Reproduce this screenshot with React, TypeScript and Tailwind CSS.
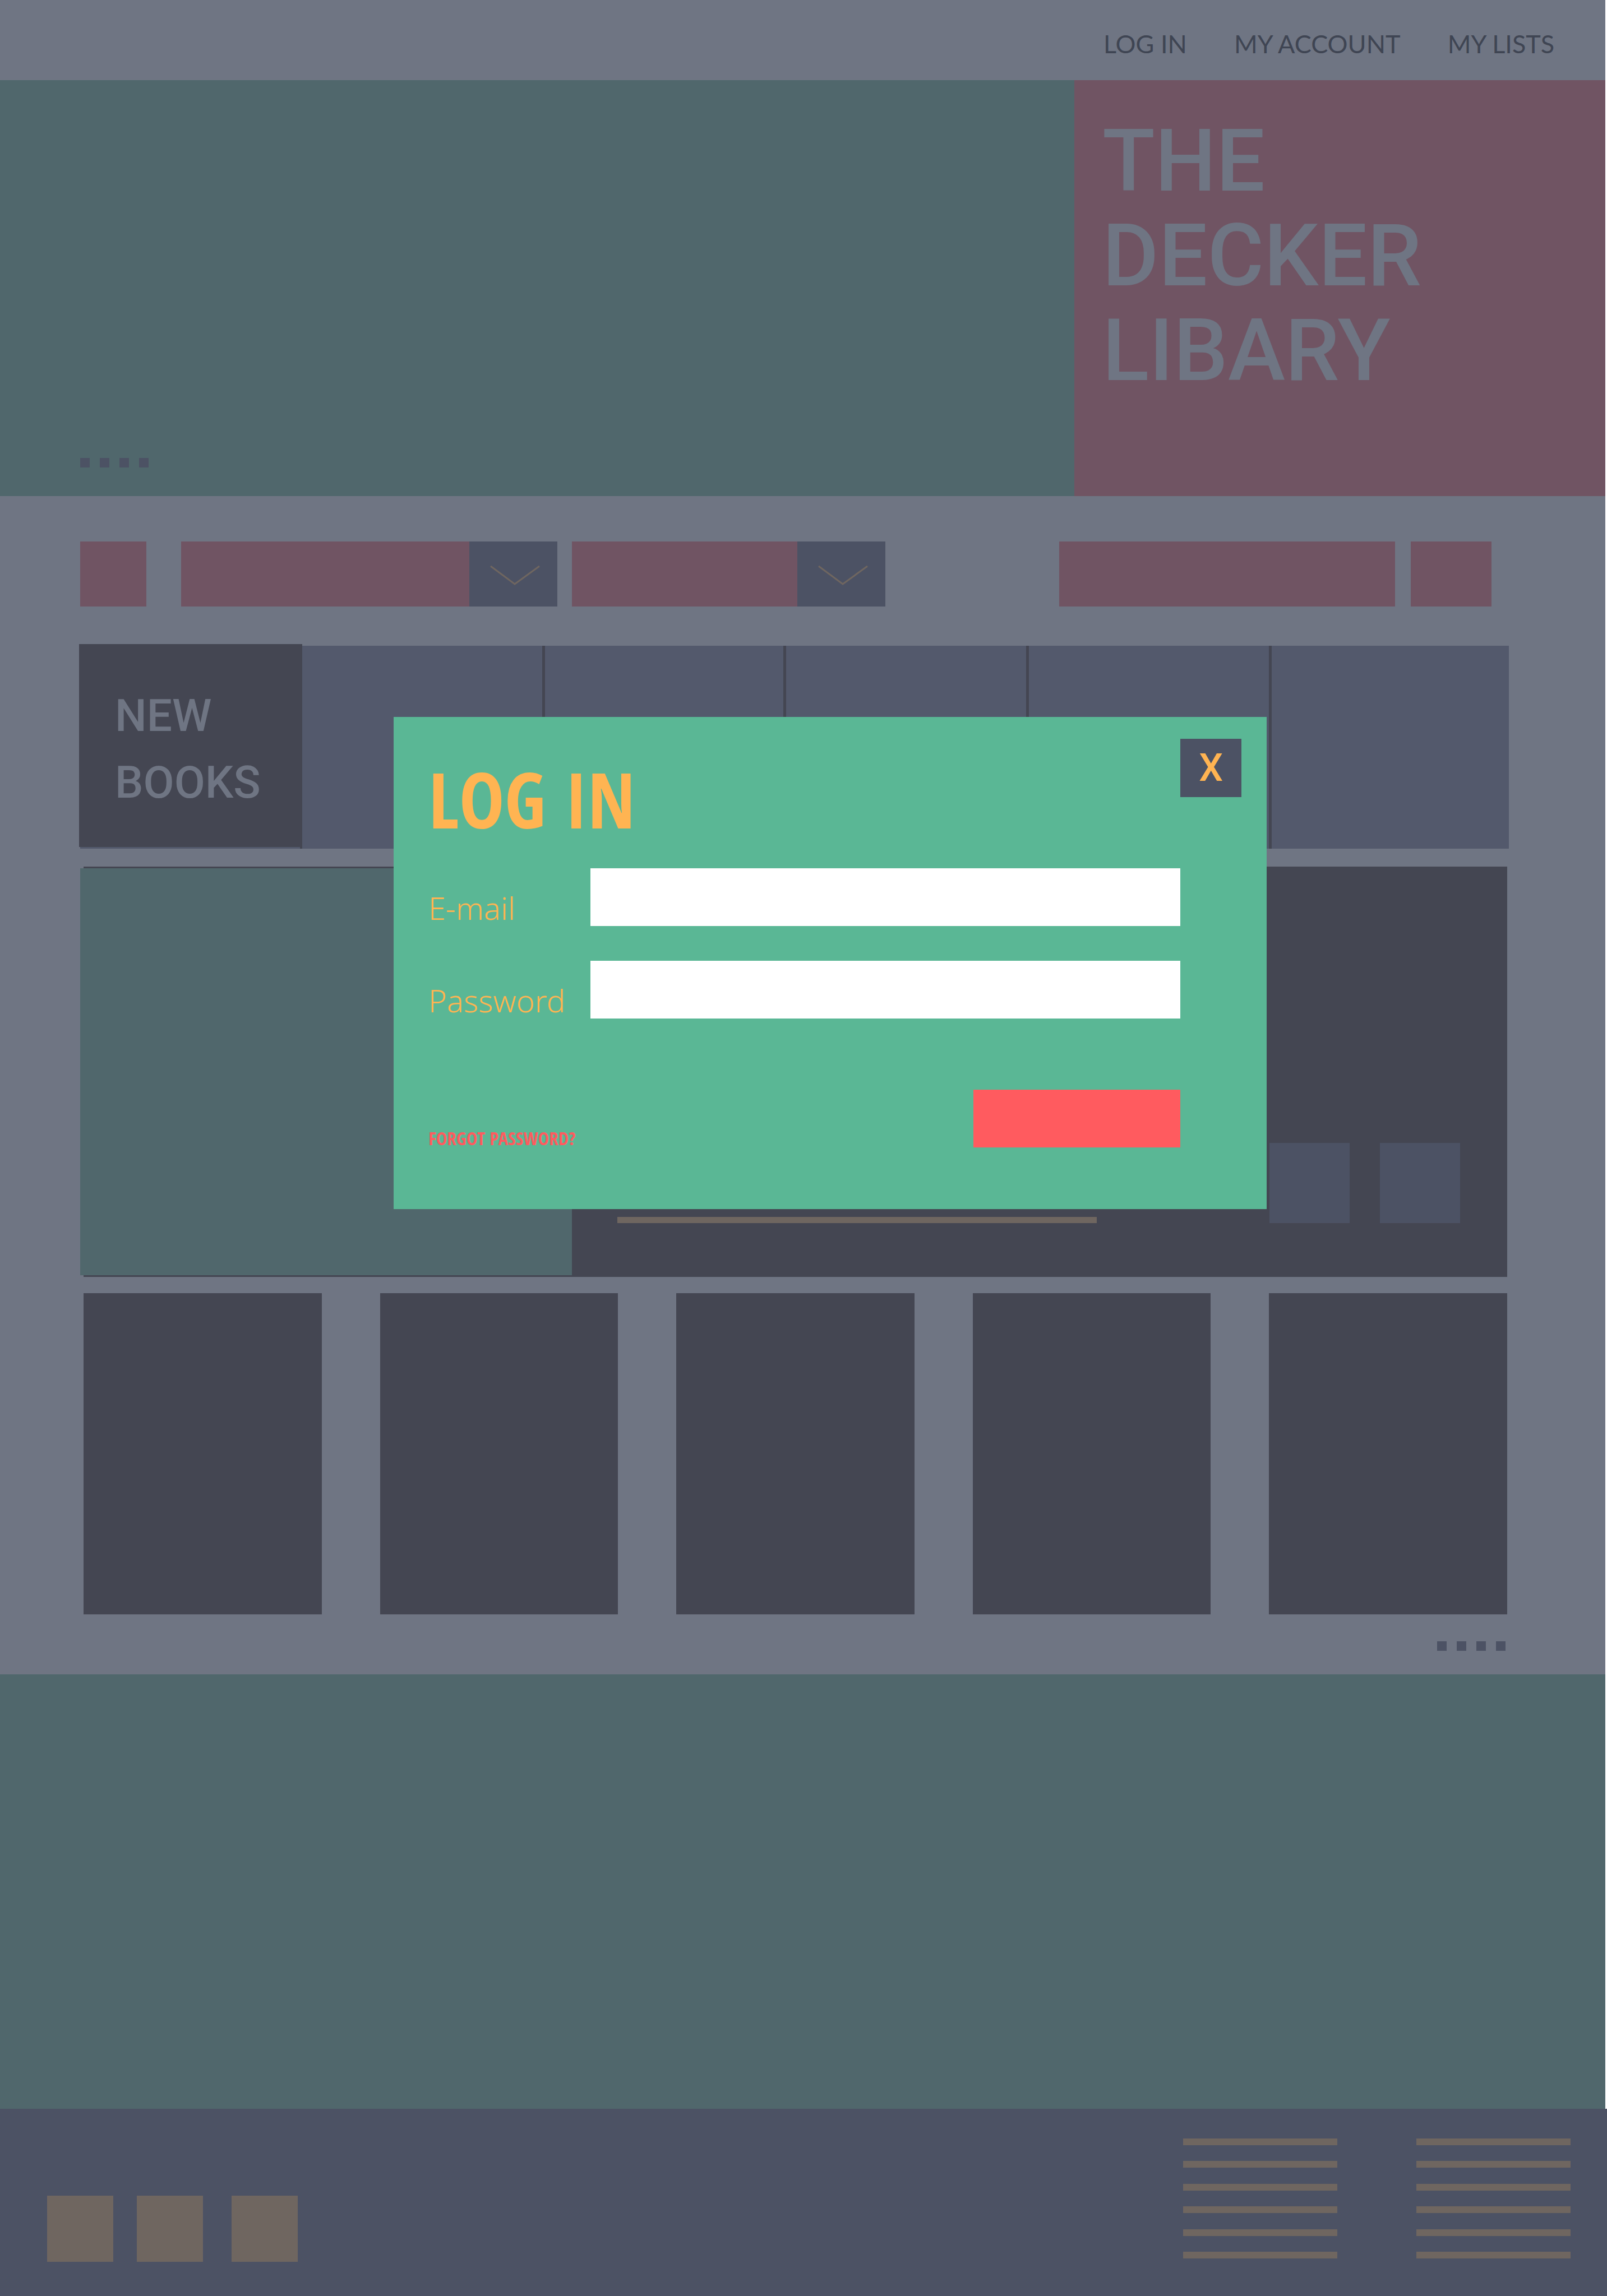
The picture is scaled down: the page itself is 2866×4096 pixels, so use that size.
const NAV_LINKS = ["LOG IN", "MY ACCOUNT", "MY LISTS"];

function Dots({ label }: { label: string }) {
  return (
    <div className="flex gap-[18px]" role="group" aria-label={label}>
      {[1, 2, 3, 4].map((n) => (
        <button key={n} type="button" aria-label={`Slide ${n}`} className="size-[17px] bg-[#4c5264]" />
      ))}
    </div>
  );
}

function Dropdown({ label, width }: { label: string; width: string }) {
  return (
    <div className={`relative h-full ${width}`}>
      <select aria-label={label} className="block h-full w-full appearance-none bg-[#705463]">
        <option value=""></option>
      </select>
      <div className="pointer-events-none absolute inset-y-0 right-0 w-[157px] bg-[#4c5264]">
        <svg viewBox="0 0 157 116" className="h-full w-full" fill="none" stroke="#6f6660" strokeWidth="3" aria-hidden="true">
          <path d="M38 44 L81 76 L125 44" />
        </svg>
      </div>
    </div>
  );
}

function FooterLinks({ label }: { label: string }) {
  return (
    <nav aria-label={label} className="flex h-[214px] w-[275px] flex-col justify-between">
      {[1, 2, 3, 4, 5, 6].map((n) => (
        <a key={n} href="#" aria-label={`${label} ${n}`} className="block h-3 bg-[#6f6660]" />
      ))}
    </nav>
  );
}

function LoginDialog() {
  return (
    <div
      role="dialog"
      aria-labelledby="login-title"
      className="absolute left-[24.5%] top-[1279px] w-[54.33%] bg-[#5ab795] pb-[110px] pl-[62px] pr-[154px] pt-[75px] text-[#ffb452]"
    >
      <button
        type="button"
        aria-label="Close"
        className="absolute right-[45px] top-[39px] flex h-[104px] w-[109px] items-center justify-center bg-[#4c5264] font-['Roboto',sans-serif] text-[68px] font-medium leading-none"
      >
        X
      </button>
      <h2
        id="login-title"
        className="font-['Open_Sans_Condensed','Roboto_Condensed',sans-serif] text-[136px] font-bold leading-[144px]"
      >
        LOG IN
      </h2>
      <form className="mt-[51px] font-['Noto_Sans',sans-serif] text-[56px] font-light leading-[64px]">
        <div className="flex items-center justify-between">
          <label htmlFor="email" className="pt-9">E-mail</label>
          <input id="email" type="email" className="h-[103px] w-[1052px] bg-white px-6 text-[#4c5264]" />
        </div>
        <div className="mt-[62px] flex items-center justify-between">
          <label htmlFor="password" className="pt-9">Password</label>
          <input id="password" type="password" className="h-[103px] w-[1052px] bg-white px-6 text-[#4c5264]" />
        </div>
        <div className="mt-[127px] flex items-end justify-between">
          <a
            href="#"
            className="font-['Open_Sans_Condensed','Roboto_Condensed',sans-serif] text-[33px] font-bold leading-8 text-[#ff5b5f]"
          >
            FORGOT PASSWORD?
          </a>
          <button type="submit" aria-label="Log in" className="h-[103px] w-[369px] bg-[#ff5b5f]" />
        </div>
      </form>
    </div>
  );
}

export default function App() {
  return (
    <div className="relative bg-white">
      <div className="mr-[3px] bg-[#6f7583]">
        <header className="flex h-[143px] justify-end">
          <nav className="flex w-[947px] items-center gap-[84px] whitespace-nowrap pl-[52px] pt-[13px] font-['Lato',sans-serif] text-[45px] leading-none text-[#3f4553]">
            {NAV_LINKS.map((t) => (
              <a key={t} href="#">{t}</a>
            ))}
          </nav>
        </header>

        <section className="flex h-[742px]">
          <div className="flex flex-1 items-end bg-[#50676c] pb-[51px] pl-[143px]">
            <Dots label="Banner slides" />
          </div>
          <div className="w-[947px] bg-[#705463] pl-[50px] pt-[60px]">
            <h1 className="font-['Roboto',sans-serif] text-[154px] font-medium leading-[169px] text-[#6f7583]">
              THE
              <br />
              DECKER
              <br />
              LIBARY
            </h1>
          </div>
        </section>

        <main className="pb-[42px] pl-[143px] pr-[172px] pt-[81px]">
          <form className="flex h-[116px] pr-[31px]">
            <button type="button" aria-label="Home" className="w-[118px] bg-[#705463]" />
            <div className="ml-[62px] mr-[26px] h-full">
              <Dropdown label="Category" width="w-[671px]" />
            </div>
            <Dropdown label="Sort" width="w-[559px]" />
            <input type="search" aria-label="Search" className="ml-auto w-[599px] bg-[#705463]" />
            <button type="submit" aria-label="Go" className="ml-7 w-36 bg-[#705463]" />
          </form>

          <div className="mt-[70px] flex h-[362px] bg-[#53596c]">
            <div className="w-[396px] border-r-4 border-[#444652]">
              <h2 className="-ml-0.5 -mr-1 -mt-[3px] h-full bg-[#444652] pl-16 pt-[69px] font-['Roboto',sans-serif] text-[80px] font-medium leading-[119px] text-[#6f7583]">
                NEW
                <br />
                BOOKS
              </h2>
            </div>
            <div className="grid flex-1 grid-cols-[428fr_430fr_433fr_433fr_428fr]">
              {[1, 2, 3, 4, 5].map((n) => (
                <button
                  key={n}
                  type="button"
                  aria-label={`Category ${n}`}
                  className="border-l-5 border-[#444652] first:border-l-0"
                />
              ))}
            </div>
          </div>

          <section className="ml-1.5 mr-[3px] mt-8 flex h-[732px] bg-[#444652] py-[3px]">
            <div className="-ml-1.5 w-[877px] bg-[#50676c]" />
            <div className="flex flex-1 items-end justify-between pb-[93px] pl-[81px] pr-[84px]">
              <div className="h-[11px] w-[855px] bg-[#6f6660]" />
              <div className="flex gap-[54px]">
                <button type="button" aria-label="Save" className="size-[143px] bg-[#4c5264]" />
                <button type="button" aria-label="Share" className="size-[143px] bg-[#4c5264]" />
              </div>
            </div>
          </section>

          <section className="ml-1.5 mr-[3px] mt-[29px] grid grid-cols-5 gap-[104px]">
            {[1, 2, 3, 4, 5].map((n) => (
              <div key={n} className="h-[573px] bg-[#444652]" />
            ))}
          </section>

          <div className="mt-12 flex justify-end pr-1.5">
            <Dots label="Book pages" />
          </div>
        </main>

        <section className="h-[775px] bg-[#50676c]" />
      </div>

      <footer className="flex h-[334px] bg-[#4c5264] pb-[61px] pl-[84px] pr-[65px] pt-[53px]">
        <div className="flex items-end">
          <a href="#" aria-label="Facebook" className="size-[118px] bg-[#6f6660]" />
          <a href="#" aria-label="Twitter" className="ml-[42px] size-[118px] bg-[#6f6660]" />
          <a href="#" aria-label="Instagram" className="ml-[51px] size-[118px] bg-[#6f6660]" />
        </div>
        <div className="ml-auto flex gap-[141px]">
          <FooterLinks label="About" />
          <FooterLinks label="Help" />
        </div>
      </footer>

      <LoginDialog />
    </div>
  );
}
